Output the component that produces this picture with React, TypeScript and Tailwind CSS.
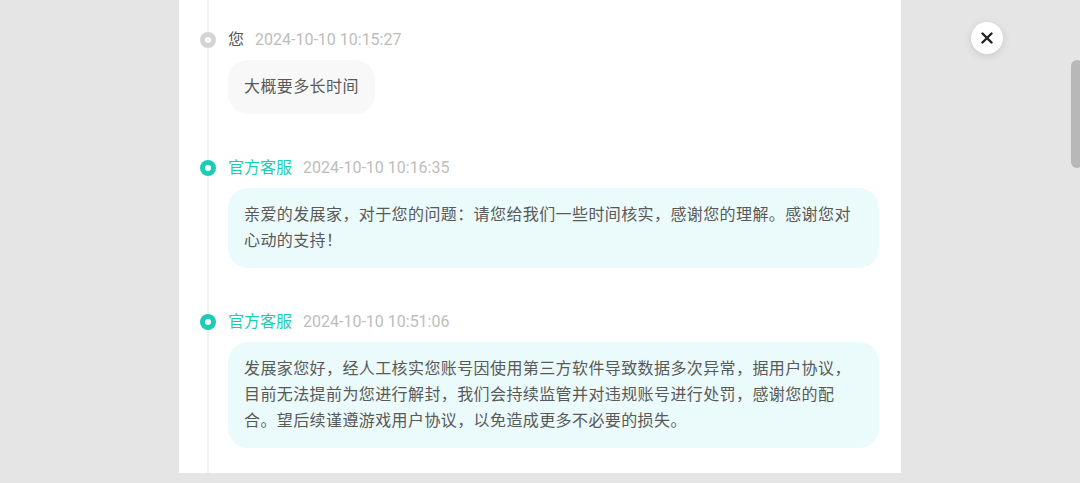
import React from 'react';

// Ticket conversation timeline shown in a modal over a gray backdrop

interface IMessage {
  id: string;
  author: string;
  time: string;
  official: boolean;
  lines: string[];
}

const messages: IMessage[] = [
  {
    id: 'm1',
    author: '您',
    time: '2024-10-10 10:15:27',
    official: false,
    lines: ['大概要多长时间'],
  },
  {
    id: 'm2',
    author: '官方客服',
    time: '2024-10-10 10:16:35',
    official: true,
    lines: [
      '亲爱的发展家，对于您的问题：请您给我们一些时间核实，感谢您的理解。感谢您对',
      '心动的支持！',
    ],
  },
  {
    id: 'm3',
    author: '官方客服',
    time: '2024-10-10 10:51:06',
    official: true,
    lines: [
      '发展家您好，经人工核实您账号因使用第三方软件导致数据多次异常，据用户协议，',
      '目前无法提前为您进行解封，我们会持续监管并对违规账号进行处罚，感谢您的配',
      '合。望后续谨遵游戏用户协议，以免造成更多不必要的损失。',
    ],
  },
];

const Dot: React.FC<{ official: boolean }> = ({ official }) => (
  <span
    className={`shrink-0 w-4 h-4 rounded-full flex items-center justify-center -ml-[28px] mr-3 ${
      official ? 'bg-[#1ccdb5]' : 'bg-[#d4d4d4]'
    }`}
  >
    <span className="w-[6px] h-[6px] rounded-full bg-white" />
  </span>
);

export default function App() {
  return (
    <div
      className="w-[1080px] h-[483px] bg-[#e5e5e5] flex overflow-hidden relative"
      style={{ fontFamily: 'Roboto, "Noto Sans CJK SC", "Noto Sans", sans-serif' }}
    >
      {/* modal panel */}
      <div className="ml-[179px] w-[722px] h-[473px] bg-white">
        {/* timeline rail drawn as the left border of the list */}
        <div className="ml-[28px] h-full border-l-2 border-[#f2f2f2] pl-[19px] pr-[22px] pt-[28px] flex flex-col gap-[42px]">
          {messages.map((m) => (
            <div key={m.id} className="flex flex-col gap-2">
              <div className="flex items-center h-6 text-[16px]">
                <Dot official={m.official} />
                <span className={m.official ? 'text-[#1ccdb5]' : 'text-[#555555]'}>{m.author}</span>
                <span className="ml-[11px] text-[#bdbdbd]">{m.time}</span>
              </div>
              <div
                className={`rounded-[20px] px-4 py-[14px] text-[16px] leading-[26px] tracking-[0.4px] text-[#595959] ${
                  m.official ? 'bg-[#ebfafa] w-full' : 'bg-[#f8f8f8] w-fit'
                }`}
              >
                {m.lines.map((l, i) => (
                  <div key={i} className="whitespace-nowrap">
                    {l}
                  </div>
                ))}
              </div>
            </div>
          ))}
        </div>
      </div>

      {/* close button */}
      <button className="absolute left-[971px] top-[22px] w-8 h-8 rounded-full bg-white shadow-[0_2px_8px_rgba(0,0,0,0.12)] flex items-center justify-center">
        <svg width="12" height="12" viewBox="0 0 12 12">
          <path d="M1.5 1.5 L10.5 10.5 M10.5 1.5 L1.5 10.5" stroke="#222" strokeWidth="2.4" strokeLinecap="round" />
        </svg>
      </button>

      {/* scrollbar thumb */}
      <div className="absolute left-[1071px] top-[60px] w-[12px] h-[108px] rounded-[6px] bg-[#b8b8b8]" />
    </div>
  );
}
